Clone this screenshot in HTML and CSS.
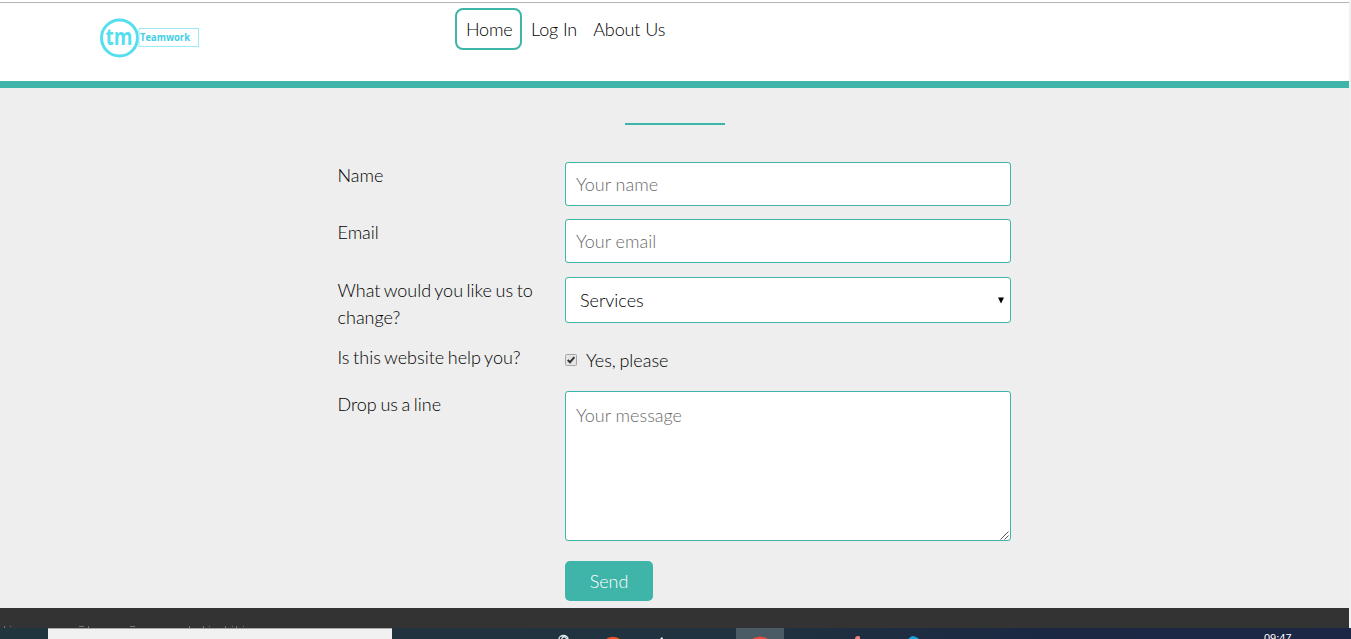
FILE: index.html
```html
<!DOCTYPE html>
<html lang="en">
<head>
<meta charset="utf-8">
<title>Teamwork</title>
<link rel="stylesheet" href="styles.css">
</head>
<body>
<div class="page">
  <header class="header">
    <svg class="logo" width="102" height="42" viewBox="0 0 102 42">
      <circle cx="20.5" cy="21" r="18" fill="none" stroke="#55dfee" stroke-width="3"/>
      <rect x="40" y="11.500" width="59.500" height="18" fill="none" stroke="#9cebf4"/>
      <text class="logo-mark" x="6.500" y="27.500" textLength="27" lengthAdjust="spacingAndGlyphs">tm</text>
      <text class="logo-name" x="41" y="24" textLength="50" lengthAdjust="spacingAndGlyphs">Teamwork</text>
    </svg>
    <nav class="nav">
      <a class="nav-link active">Home</a>
      <a class="nav-link">Log In</a>
      <a class="nav-link">About Us</a>
    </nav>
  </header>
  <main class="content">
    <div class="rule"></div>
    <form class="form">
      <label class="label">Name</label>
      <input class="field" type="text" placeholder="Your name">
      <label class="label">Email</label>
      <input class="field" type="text" placeholder="Your email">
      <label class="label">What would you like us to change?</label>
      <div class="field select"><span>Services</span><svg width="6" height="7" viewBox="0 0 6 7"><path d="M0 0.500H6L3 6.500Z"/></svg></div>
      <label class="label">Is this website help you?</label>
      <div class="check">
        <svg width="12" height="12" viewBox="0 0 12 12"><rect x=".5" y=".5" width="11" height="11" rx="1" fill="#e4e4e4" stroke="#a5a5a5"/><path d="M2.800 6L5 8.300L9.300 3.200" fill="none" stroke="#333" stroke-width="2"/></svg>
        <span>Yes, please</span>
      </div>
      <label class="label">Drop us a line</label>
      <div class="message">
        <textarea class="field area" placeholder="Your message"></textarea>
        <svg class="grip" width="9" height="9" viewBox="0 0 9 9"><path d="M.5 8.500L8.500 .5M4.500 8.500L8.500 4.500" stroke="#555" fill="none"/></svg>
      </div>
      <button class="send" type="button">Send</button>
    </form>
  </main>
  <footer class="footer">
    <svg width="260" height="2" viewBox="0 0 260 2" fill="#777"><path d="M4 0h1v2h-1zM10 0h1v1h-1zM79 0h5v1h-5zM88 0h1v2h-1zM130 0h5v1h-5zM189 0h1v2h-1zM203 0h1v2h-1zM209 0h1v1h-1zM225 0h1v2h-1zM232 0h1v1h-1zM236 0h1v2h-1zM243 0h1v1h-1z"/></svg>
  </footer>
</div>
<div class="taskbar">
  <div class="search"></div>
  <svg class="apps" width="320" height="11" viewBox="540 628 320 11">
    <path d="M559 639a4.500 3.500 0 0 1 9 0M562 639a2 1.500 0 0 1 4-1l3 2" fill="none" stroke="#dde3e6" stroke-width="1.300"/>
    <path d="M606 639q7-4.500 14 0z" fill="#f04e23"/>
    <path d="M660 639l2-2 1 2z" fill="#fff"/>
    <path d="M736 628h48v11h-48z" fill="#4b5b65"/>
    <path d="M752 639q8-5 16 0z" fill="#e94b3c"/>
    <path d="M855 639q0-3 3-3 3 0 3 3z" fill="#f08080"/>
  </svg>
  <svg class="edge" width="20" height="11" viewBox="905 628 20 11"><path d="M908 639l4-3q4 0 7 3z" fill="#16a3e0"/></svg>
  <span class="clock">09:47</span>
</div>
</body>
</html>
```
FILE: styles.css
```css
* { box-sizing: border-box; }
body {
  margin: 0;
  height: 639px;
  overflow: hidden;
  background: #f0f0f0;
  color: #000;
  font: 300 18px/27px Lato, sans-serif;
}
.page { width: 1349px; height: 628px; }
.header {
  display: flex;
  height: 88px;
  padding: 6px 0 0 99px;
  background: #fff;
  border-top: 1px solid #fff;
  border-bottom: 7px solid #3fb4a8;
  box-shadow: inset 0 1px #fff, inset 0 2px #b5b5b8;
}
.logo { margin-top: 10px; }
.logo-mark { font: 700 23px "Open Sans", sans-serif; fill: #55dfee; }
.logo-name { font: 700 11px "Open Sans", sans-serif; fill: #3fcfe6; }
.nav { display: flex; margin: 1px 0 0 254px; letter-spacing: -0.1px; }
.nav-link {
  height: 42px;
  padding: 8px 8px 0 9px;
  white-space: nowrap;
}
.nav-link + .nav-link + .nav-link { padding-left: 8px; }
.nav-link.active {
  width: 67px;
  padding: 6px 0 0 9px;
  border: 2px solid #3fb4a8;
  border-radius: 8px;
  letter-spacing: -0.2px;
}
.content { height: 520px; padding-top: 35px; background: #eee; }
.rule { width: 100px; height: 2px; margin: 0 auto; background: #3fb4a8; }
.form {
  display: grid;
  grid-template-columns: 228px 446px;
  grid-template-rows: 57px 58px 67px 47px 170px 40px;
  width: 674px;
  margin: 37px 0 0 337px;
}
.label { width: 205px; padding-left: 0.5px; word-spacing: -1.3px; }
.field {
  display: block;
  width: 446px;
  height: 44px;
  margin: 0;
  padding: 0 10px;
  border: 1px solid #3fb4a8;
  border-radius: 3px;
  background: #fff;
  font: inherit;
  color: #000;
}
.field::placeholder { color: #6a6a6a; opacity: 1; }
.select {
  display: flex;
  align-items: center;
  justify-content: space-between;
  height: 46px;
  padding: 1px 6px 0 14px;
}
.select svg { margin-bottom: 1px; }
.check { display: flex; align-items: center; gap: 9px; height: 32px; word-spacing: -1.3px; }
.message { position: relative; }
.area { height: 150px; padding: 10px; resize: none; }
.grip { position: absolute; right: 2px; bottom: 21px; }
.send {
  grid-column: 2;
  width: 88px;
  height: 40px;
  padding: 0;
  border: 0;
  border-radius: 5px;
  background: #3fb4a8;
  color: #fff;
  font: inherit;
}
.footer { display: flex; align-items: flex-end; height: 20px; background: #333; }
.taskbar {
  display: flex;
  height: 11px;
  overflow: hidden;
  background: linear-gradient(90deg, #21353f 0%, #20323f 55%, #1b2743 80%, #1b2744 100%);
}
.search { width: 344px; margin-left: 48px; background: #f1f1f1; border-top: 1px solid #aaa; }
.apps { margin-left: 148px; }
.edge { margin-left: 45px; }
.clock {
  margin: 4px 0 0 339px;
  font: 400 11px/12px "Liberation Sans", sans-serif;
  color: #fff;
}
```
